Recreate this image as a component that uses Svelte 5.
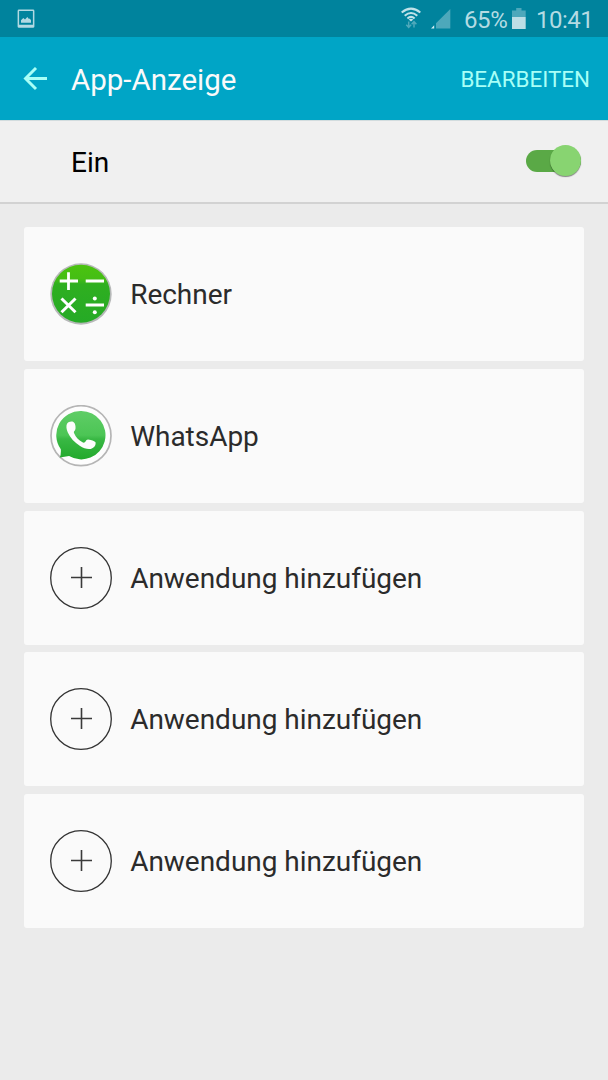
<script>
  let enabled = $state(true);

  const items = [
    { icon: 'calculator', label: 'Rechner' },
    { icon: 'whatsapp', label: 'WhatsApp' },
    { icon: 'add', label: 'Anwendung hinzufügen' },
    { icon: 'add', label: 'Anwendung hinzufügen' },
    { icon: 'add', label: 'Anwendung hinzufügen' }
  ];
</script>

<div class="screen">
  <div class="status-bar">
    <svg class="screenshot-icon" width="18" height="20" viewBox="0 0 18 20">
      <path
        d="M2 .6h14a1.400 1.400 0 0 1 1.400 1.400v15.400a1.400 1.400 0 0 1-1.400 1.400H2A1.400 1.400 0 0 1 .6 17.400V2A1.400 1.400 0 0 1 2 .6zM2.100 2.100V15.800h13.800V2.100z"
        fill="#b2d9e2"
        fill-rule="evenodd"
      />
      <path d="M4 13.700v-2.400l2.300-2.300 1.700 1.400 2.300-2.500 1.700 2 .8-.4 1.200 1.800v2.400z" fill="#b2d9e2" />
    </svg>
    <div class="status-right">
      <svg class="wifi" width="20" height="22" viewBox="0 0 20 22">
        <g fill="none" stroke="#c0e2e9" stroke-width="2">
          <path d="M.7 5.500Q10-2.200 19.300 5.500" />
          <path d="M3.700 8.700Q10 3.200 16.300 8.700" />
          <path d="M6.400 11.500Q10 8.300 13.600 11.500" />
        </g>
        <path d="M7.700 12.600q2.300-1.800 4.600 0L10 14.600z" fill="#c0e2e9" />
        <path
          d="M7.700 14.500v5.500M5.300 17.800l2.400 2.500 2.400-2.500M13 20.500v-5.500M10.600 17.200l2.400-2.500 2.400 2.500"
          fill="none"
          stroke="#4fa9bb"
          stroke-width="1.500"
        />
      </svg>
      <svg class="signal" width="20" height="20" viewBox="0 0 20 20">
        <path d="M19.300 0v19.600H5V14.300z" fill="#4da8bb" />
        <path d="M3.200 16.200v3.400H0z" fill="#d4eef3" />
      </svg>
      <span class="percent">65%</span>
      <svg class="battery" width="14" height="21" viewBox="0 0 14 21">
        <path d="M0 2.500h4.200V0h5.300v2.500h4.200V9H0z" fill="#4da8bb" />
        <path d="M0 9h13.700v12H0z" fill="#bcdee6" />
      </svg>
      <span class="clock">10:41</span>
    </div>
  </div>

  <header class="app-bar">
    <button class="back" aria-label="Zurück">
      <svg width="24" height="24" viewBox="0 0 24 24">
        <path d="M13 1L2.500 11.500l10.500 10.500M2.900 11.500H24" />
      </svg>
    </button>
    <h1>App-Anzeige</h1>
    <button class="edit">BEARBEITEN</button>
  </header>

  <div class="master">
    <span class="master-label">Ein</span>
    <button
      class="switch"
      class:on={enabled}
      role="switch"
      aria-checked={enabled}
      aria-label="App-Anzeige"
      onclick={() => (enabled = !enabled)}
    >
      <span class="thumb"></span>
    </button>
  </div>

  <main class="list">
    {#each items as item}
      <button class="card">
        <svg class="app-icon" width="62" height="62" viewBox="0 0 62 62">
          {#if item.icon === 'calculator'}
            <defs>
              <linearGradient id="calc" x1="0" y1="0" x2="0" y2="1">
                <stop offset="0" stop-color="#4bc30f" />
                <stop offset=".24" stop-color="#45be14" />
                <stop offset=".34" stop-color="#2faf20" />
                <stop offset="1" stop-color="#25aa26" />
              </linearGradient>
            </defs>
            <circle cx="31" cy="31" r="30.700" fill="#b6b8b8" />
            <circle cx="31" cy="30.700" r="29" fill="url(#calc)" />
            <g stroke="#fff" stroke-width="2.800">
              <path d="M9.700 18h18.300M18.500 9.200v17.800M35.700 18H54M35.700 42H54" />
              <path d="M11.500 35.500l14 13.800M25.500 35.500l-14 13.800" stroke-width="3" />
            </g>
            <circle cx="44.800" cy="35.400" r="2" fill="#fff" />
            <circle cx="44.800" cy="49.300" r="2" fill="#fff" />
          {:else if item.icon === 'whatsapp'}
            <defs>
              <linearGradient id="wa" x1="0" y1="0" x2="0" y2="1">
                <stop offset="0" stop-color="#5fcd66" />
                <stop offset=".5" stop-color="#4cc555" />
                <stop offset=".58" stop-color="#39b844" />
                <stop offset="1" stop-color="#22a92c" />
              </linearGradient>
            </defs>
            <circle cx="31" cy="30.700" r="30" fill="#fdfdfd" stroke="#b5b5b5" stroke-width="1.700" />
            <path
              d="M31.300 6a24.200 24.200 0 1 1-12.200 45.100L9.800 52.500q1.400-3.600 1-8.200A24.200 24.200 0 0 1 31.300 6z"
              fill="url(#wa)"
            />
            <path
              d="M17 18.800c1.800-2.800 6.400-3.400 7.800-.3.700 2 1.100 4.700.4 6.300-.6 1.400-1.800 1.700-1.200 3.200 1.800 4.200 4.600 7.300 8.500 9.300 1.700.9 2.700-.1 3.800-2.100 1-1.200 2.600-.8 4.500-.2 2.400.8 4.900 1.600 4.900 2.700.1 3.100-2 5.400-5 6.200-3 .7-7-.5-11-3.100-5-3.300-9.600-8-11.900-13.300-1.500-3.500-1.800-6.400-.8-8.700z"
              fill="#fdfdfd"
            />
          {:else}
            <circle cx="31" cy="31" r="30.300" fill="none" stroke="#333" stroke-width="1.300" />
            <path d="M21 30.500h21M31.500 20v21" stroke="#3a3a3a" stroke-width="1.600" />
          {/if}
        </svg>
        <span class="label">{item.label}</span>
      </button>
    {/each}
  </main>
</div>

<style>
  :global(body) {
    margin: 0;
    background: #ebebeb;
  }

  .screen {
    width: 608px;
    min-height: 1080px;
    background: #ebebeb;
    font-family: Roboto, 'Liberation Sans', sans-serif;
    color: #2b2b2b;
  }

  button {
    margin: 0;
    padding: 0;
    border: none;
    background: none;
    font: inherit;
    color: inherit;
    text-align: left;
    cursor: pointer;
  }

  svg {
    display: block;
    flex: none;
  }

  .status-bar {
    display: flex;
    justify-content: space-between;
    box-sizing: border-box;
    height: 37px;
    padding: 0 16px 0 17px;
    background: #00839d;
    color: #b4dbe3;
  }

  .screenshot-icon {
    margin-top: 9px;
  }

  .status-right {
    display: flex;
    font-size: 24px;
    line-height: 41px;
  }

  .wifi {
    margin: 7px 10px 0 0;
  }

  .signal {
    margin: 9px 13px 0 0;
  }

  .percent {
    width: 45px;
    letter-spacing: -0.4px;
  }

  .battery {
    margin: 8px 10px 0 3px;
  }

  .clock {
    width: 56px;
    letter-spacing: -0.5px;
  }

  .app-bar {
    display: flex;
    align-items: center;
    height: 83px;
    padding: 0 18px 0 23px;
    background: #00a5c6;
  }

  .back {
    width: 48px;
  }

  .back path {
    fill: none;
    stroke: #a8fff7;
    stroke-width: 2.9;
  }

  h1 {
    flex: 1;
    margin: 2px 0 0;
    font-size: 29.5px;
    font-weight: 400;
    color: #fafafa;
  }

  .edit {
    margin-top: 1px;
    font-size: 22.4px;
    color: #a8fff7;
  }

  .master {
    display: flex;
    align-items: center;
    justify-content: space-between;
    box-sizing: border-box;
    height: 84px;
    padding: 0 27px 0 71px;
    border-top: 1px solid #d2dcde;
    border-bottom: 2px solid #d2d2d2;
    background: #f0f0f0;
  }

  .master-label {
    margin-top: 2px;
    font-size: 28px;
    color: #000;
  }

  .switch {
    display: flex;
    align-items: center;
    width: 55px;
    height: 22px;
    margin-bottom: 2px;
    border-radius: 11px;
    background: #b5b5b5;
  }

  .thumb {
    width: 31px;
    height: 31px;
    border-radius: 50%;
    background: #f5f5f5;
    box-shadow: 0 1px 1px rgba(0, 0, 0, 0.45);
  }

  .switch.on {
    justify-content: flex-end;
    background: #5aa946;
  }

  .switch.on .thumb {
    background: #88d471;
  }

  .list {
    display: flex;
    flex-direction: column;
    gap: 7.75px;
    padding: 23px 24.4px 0;
  }

  .card {
    display: flex;
    align-items: center;
    gap: 18px;
    height: 134px;
    padding: 0 25.8px;
    border-radius: 3px;
    background: #fafafa;
  }

  .label {
    padding-top: 1px;
    font-size: 28px;
    letter-spacing: -0.03px;
    white-space: nowrap;
  }
</style>
